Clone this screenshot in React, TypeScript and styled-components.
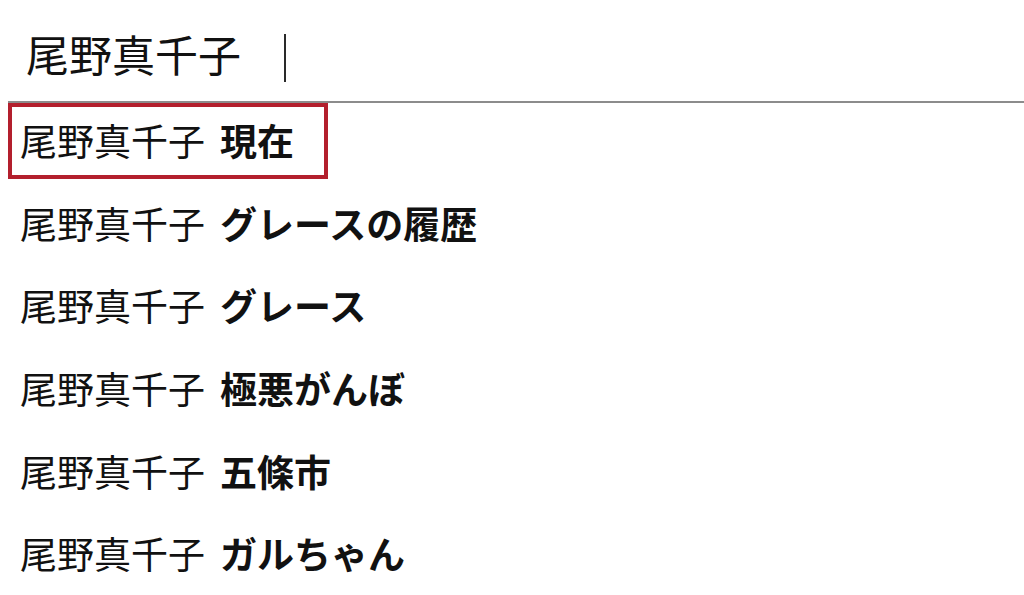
import styled, { createGlobalStyle } from "styled-components";

const GlobalStyle = createGlobalStyle`
    html, body {
        margin: 0;
        padding: 0;
        background: #ffffff;
        overflow: hidden;
    }
    body {
        font-family: "Noto Sans CJK JP", "Noto Sans", sans-serif;
        color: #111111;
    }
`;

const Page = styled.div`
    width: 1024px;
    height: 595px;
    display: flex;
    flex-direction: column;
`;

// search field with the typed query and the caret
const SearchField = styled.div`
    height: 104px;
    display: flex;
    align-items: center;
    margin-left: 8px;
    padding-left: 18px;
    border-bottom: 2px solid #8c8c8c;
`;

const Query = styled.span`
    font-size: 43px;
    line-height: 1;
    font-weight: 400;
    margin-top: 6px;
`;

const Caret = styled.span`
    width: 2px;
    height: 48px;
    background: #2a2a2a;
    margin-left: 43px;
    margin-top: 14px;
`;

const SuggestionList = styled.ul`
    list-style: none;
    margin: -4px 0 0;
    padding: 0;
`;

const Suggestion = styled.li<{ $active?: boolean }>`
    display: flex;
    align-items: center;
    gap: 15px;
    height: ${props => (props.$active ? "76px" : "82.6px")};
    box-sizing: border-box;
    padding-left: ${props => (props.$active ? "8px" : "20px")};
    margin: ${props => (props.$active ? "3.3px 0 3.3px 8px" : "0")};
    width: ${props => (props.$active ? "320px" : "auto")};
    border: ${props => (props.$active ? "4px solid #b31f2d" : "none")};
    font-size: 37px;
    line-height: 1;
`;

const Prefix = styled.span`
    font-weight: 400;
`;

const Completion = styled.span`
    font-weight: 700;
`;

const suggestions = ["現在", "グレースの履歴", "グレース", "極悪がんぼ", "五條市", "ガルちゃん"];

export default function App() {
    return (
        <>
            <GlobalStyle />
            <Page>
                <SearchField>
                    <Query>尾野真千子</Query>
                    <Caret />
                </SearchField>
                <SuggestionList>
                    {suggestions.map((s, i) => (
                        <Suggestion key={s} $active={i === 0}>
                            <Prefix>尾野真千子</Prefix>
                            <Completion>{s}</Completion>
                        </Suggestion>
                    ))}
                </SuggestionList>
            </Page>
        </>
    );
}
